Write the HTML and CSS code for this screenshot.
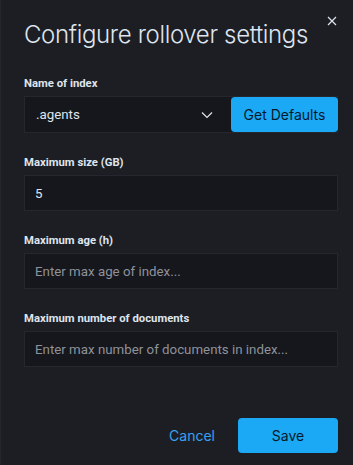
FILE: index.html
```html
<!DOCTYPE html>
<html>
<head>
<meta charset="UTF-8">
<title>Configure rollover settings</title>
<link rel="stylesheet" href="styles.css">
</head>
<body>
<div class="modal">
  <button class="close" aria-label="Close">
    <svg width="10" height="10" viewBox="0 0 10 10"><path d="M1 1L9 9M9 1L1 9" stroke="#dfe5ef" stroke-width="1.2" fill="none"/></svg>
  </button>
  <h1 class="title">Configure rollover settings</h1>

  <div class="row">
    <label class="lbl">Name of index</label>
    <div class="group">
      <div class="select">
        <span class="val">.agents</span>
        <svg class="chev" width="12" height="8" viewBox="0 0 12 8"><path d="M1 1.5L6 6.5L11 1.5" stroke="#dfe5ef" stroke-width="1.2" fill="none"/></svg>
      </div>
      <button class="btn fill defaults">Get Defaults</button>
    </div>
  </div>

  <div class="row">
    <label class="lbl">Maximum size (GB)</label>
    <div class="field"><span class="val">5</span></div>
  </div>

  <div class="row">
    <label class="lbl">Maximum age (h)</label>
    <div class="field"><span class="ph">Enter max age of index...</span></div>
  </div>

  <div class="row">
    <label class="lbl">Maximum number of documents</label>
    <div class="field"><span class="ph">Enter max number of documents in index...</span></div>
  </div>

  <div class="foot">
    <button class="btn link">Cancel</button>
    <button class="btn fill save">Save</button>
  </div>
</div>
</body>
</html>
```

FILE: styles.css
```css
html, body {
  margin: 0;
  padding: 0;
  background: #1d1e24;
}
body {
  font-family: Inter, "Liberation Sans", sans-serif;
  color: #dfe5ef;
}
.modal {
  position: relative;
  width: 353px;
  height: 465px;
  box-sizing: border-box;
  padding: 19px 15px 0 23px;
  border-left: 1px solid #25262d;
  display: flex;
  flex-direction: column;
}
.close {
  position: absolute;
  top: 15px;
  right: 15px;
  width: 12px;
  height: 12px;
  padding: 0;
  border: 0;
  background: none;
  display: flex;
  align-items: center;
  justify-content: center;
}
.title {
  margin: 0 0 24px 0;
  font-size: 24px;
  line-height: 32px;
  font-weight: 300;
  color: #dfe5ef;
  letter-spacing: -0.35px;
}
.row {
  display: flex;
  flex-direction: column;
  margin-bottom: 21px;
}
.lbl {
  font-family: Roboto, Inter, sans-serif;
  font-size: 11.3px;
  line-height: 17px;
  font-weight: 700;
  color: #dfe5ef;
  margin-bottom: 4px;
}
.group {
  display: flex;
  height: 37px;
  background: #16171c;
  border: 1px solid #26272e;
  box-sizing: border-box;
}
.select {
  flex: 1;
  display: flex;
  align-items: center;
  padding: 0 12px 0 11px;
  justify-content: space-between;
}
.chev { margin-right: 6px; }
.field {
  height: 36px;
  box-sizing: border-box;
  background: #16171c;
  border: 1px solid #26272e;
  display: flex;
  align-items: center;
  padding: 0 11px 0 10px;
}
.val, .ph {
  font-family: Roboto, Inter, sans-serif;
  font-size: 13.3px;
  color: #dfe5ef;
}
.ph {
  color: #8e929b;
}
.btn {
  font-family: Inter, "Liberation Sans", sans-serif;
  font-size: 14px;
  border: 0;
  padding: 0;
  cursor: pointer;
}
.fill {
  background: #1ba9f5;
  color: #07182b;
  border-radius: 4px;
}
.defaults {
  width: 107px;
  margin: 0 -1px 0 0;
  height: 35px;
  align-self: center;
}
.foot {
  margin-top: auto;
  margin-bottom: 12px;
  display: flex;
  justify-content: flex-end;
  align-items: center;
}
.link {
  background: none;
  color: #36a2ef;
  margin-right: 23px;
}
.save {
  width: 100px;
  height: 35px;
}
```
